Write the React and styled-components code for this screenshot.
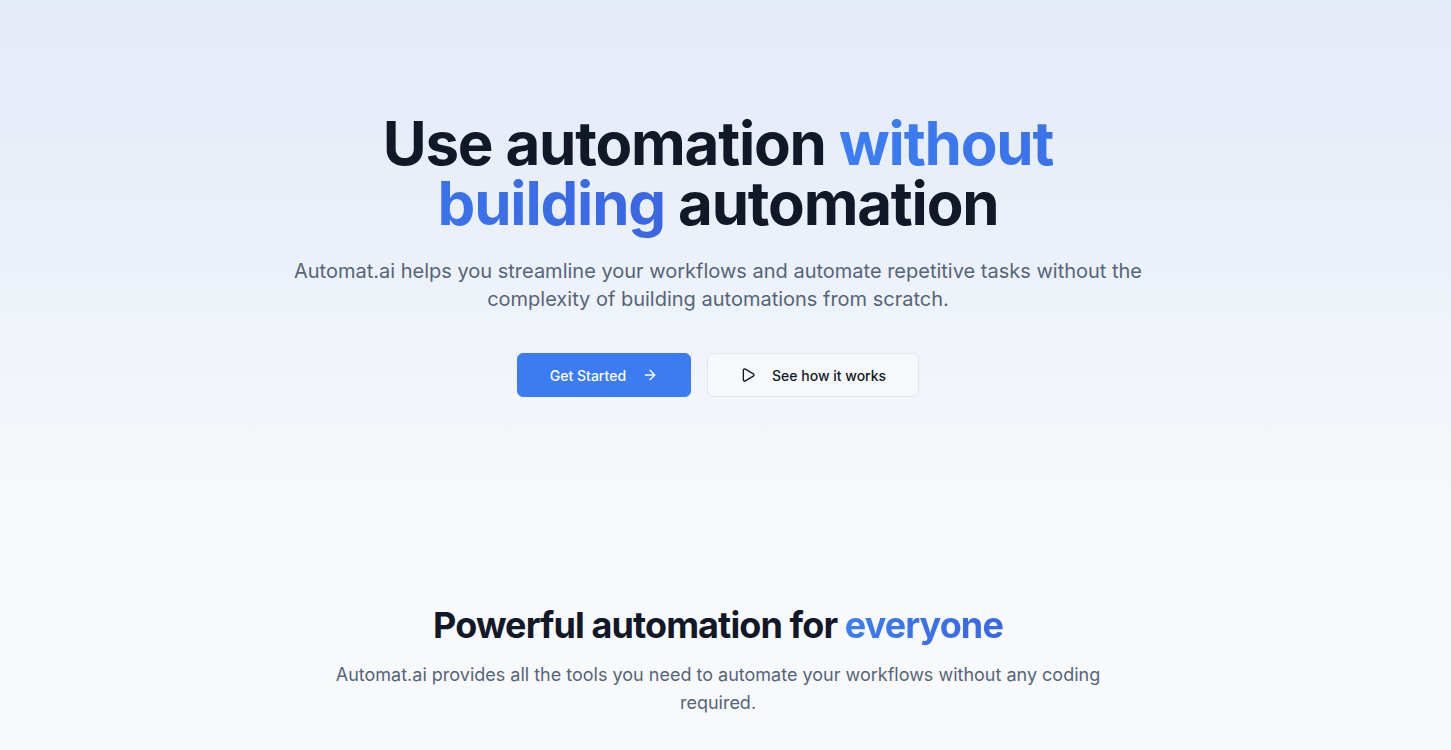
import React from 'react';
import styled, { createGlobalStyle } from 'styled-components';
import { ArrowRight, Play } from 'lucide-react';

const GlobalStyle = createGlobalStyle`
  * { box-sizing: border-box; }
  body {
    margin: 0;
    background: #f8f9fb;
    font-family: Inter, "Noto Sans", sans-serif;
    -webkit-font-smoothing: antialiased;
  }
`;

// the reference was taken with a 15px scrollbar gutter on the right,
// so the hero wash sits on the page itself and spans the gutter too
const Page = styled.div`
  min-height: 100vh;
  padding-right: 15px;
  background:
    linear-gradient(180deg, #e4ebf8 0%, #ebf0f9 45%, #f8f9fb 100%) 0 0 / 100% 525px no-repeat,
    #f8f9fb;
`;

const Hero = styled.section`
  padding: 113px 24px 128px;
  display: flex;
  flex-direction: column;
  align-items: center;
  text-align: center;
`;

const HeroInner = styled.div`
  max-width: 896px;
  display: flex;
  flex-direction: column;
  align-items: center;
`;

const Title = styled.h1`
  margin: 0 0 24px;
  font-size: 60px;
  line-height: 1;
  font-weight: 700;
  letter-spacing: -1.2px;
  color: #111827;
`;

const Accent = styled.span`
  background: linear-gradient(90deg, ${p => p.$from}, ${p => p.$to});
  -webkit-background-clip: text;
  background-clip: text;
  color: transparent;
`;

const Lead = styled.p`
  margin: 0;
  font-size: ${p => (p.$small ? '18px' : '20px')};
  line-height: 28px;
  color: #556579;
`;

const Actions = styled.div`
  display: flex;
  gap: 16px;
  margin-top: 40px;
`;

const Button = styled.button`
  display: inline-flex;
  align-items: center;
  gap: 16px;
  height: 44px;
  padding: 0 32px;
  border-radius: 6px;
  font-family: inherit;
  font-size: 14px;
  font-weight: 500;
  cursor: pointer;
  border: 1px solid ${p => (p.$primary ? '#3b7cf2' : '#e2e6ee')};
  background: ${p => (p.$primary ? '#3b7cf2' : '#f7f8fb')};
  color: ${p => (p.$primary ? '#ffffff' : '#111827')};
`;

const Features = styled.section`
  padding: 80px 24px;
  display: flex;
  justify-content: center;
  text-align: center;
`;

const FeaturesInner = styled.div`
  max-width: 768px;
`;

const SectionTitle = styled.h2`
  margin: 0 0 16px;
  font-size: 36px;
  line-height: 40px;
  font-weight: 700;
  letter-spacing: -0.9px;
  color: #111827;
`;

const App = () => {
  return (
    <Page>
      <GlobalStyle />
      <Hero>
        <HeroInner>
          <Title>
            Use automation <Accent $from="#3b7ef3" $to="#3a66e2">without building</Accent> automation
          </Title>
          <Lead>
            Automat.ai helps you streamline your workflows and automate repetitive tasks without the
            complexity of building automations from scratch.
          </Lead>
          <Actions>
            <Button $primary>
              Get Started
              <ArrowRight size={16} strokeWidth={2} />
            </Button>
            <Button>
              <Play size={16} strokeWidth={2} />
              See how it works
            </Button>
          </Actions>
        </HeroInner>
      </Hero>
      <Features>
        <FeaturesInner>
          <SectionTitle>
            Powerful automation for <Accent $from="#3b7ef3" $to="#3a66e2">everyone</Accent>
          </SectionTitle>
          <Lead $small>
            Automat.ai provides all the tools you need to automate your workflows without any coding
            required.
          </Lead>
        </FeaturesInner>
      </Features>
    </Page>
  );
};

export default App;
